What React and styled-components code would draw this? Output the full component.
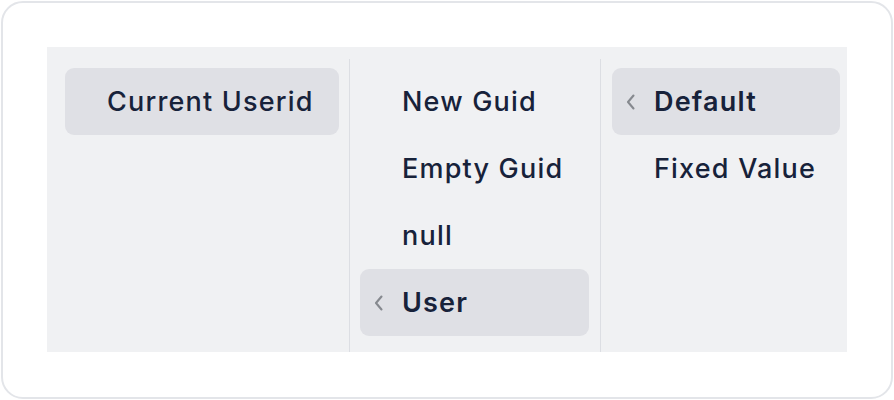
import React from 'react';
import styled, { createGlobalStyle } from 'styled-components';

const GlobalStyle = createGlobalStyle`
  html, body {
    margin: 0;
    padding: 0;
    background: #ffffff;
  }
  body {
    font-family: Inter, "Noto Sans", sans-serif;
  }
`;

const Card = styled.div`
  box-sizing: border-box;
  width: 892px;
  height: 398px;
  margin: 1px;
  padding: 44px;
  border: 2px solid #e3e5e9;
  border-radius: 22px;
  background: #ffffff;
`;

const Panel = styled.div`
  display: flex;
  height: 305px;
  background: #f0f1f3;
`;

const Column = styled.div`
  box-sizing: border-box;
  display: flex;
  flex-direction: column;
  width: ${p => p.width}px;
  padding: 21px ${p => p.padRight}px 0 ${p => p.padLeft}px;
`;

const Divider = styled.div`
  width: 1px;
  margin-top: 12px;
  background: #dcdee3;
`;

const Item = styled.div`
  box-sizing: border-box;
  display: flex;
  align-items: center;
  height: 67px;
  padding-left: 14px;
  border-radius: 9px;
  background: ${p => (p.active ? '#dfe0e5' : 'transparent')};
  color: #17223a;
  font-size: 27px;
  font-weight: ${p => (p.bold ? 600 : 500)};
  letter-spacing: 1.2px;
  white-space: nowrap;
`;

const Slot = styled.span`
  display: flex;
  align-items: center;
  width: 28px;
  flex: none;
`;

const Chevron = () => (
  <svg width="10" height="16" viewBox="0 0 10 16" fill="none">
    <path d="M7.5 1.5 L2 8 L7.5 14.5" stroke="#86898f" strokeWidth="2.1" strokeLinecap="round" strokeLinejoin="round" />
  </svg>
);

const columns = [
  {
    width: 302, padLeft: 18, padRight: 10,
    items: [{ label: 'Current Userid', active: true }],
  },
  {
    width: 250, padLeft: 10, padRight: 11,
    items: [
      { label: 'New Guid' },
      { label: 'Empty Guid' },
      { label: 'null' },
      { label: 'User', active: true, bold: true, chevron: true },
    ],
  },
  {
    width: 246, padLeft: 11, padRight: 7,
    items: [
      { label: 'Default', active: true, bold: true, chevron: true },
      { label: 'Fixed Value' },
    ],
  },
];

export default function App() {
  return (
    <>
      <GlobalStyle />
      <Card>
        <Panel>
          {columns.map((col, i) => (
            <React.Fragment key={i}>
              {i > 0 && <Divider />}
              <Column width={col.width} padLeft={col.padLeft} padRight={col.padRight}>
                {col.items.map(item => (
                  <Item key={item.label} active={item.active} bold={item.bold}>
                    <Slot>{item.chevron && <Chevron />}</Slot>
                    {item.label}
                  </Item>
                ))}
              </Column>
            </React.Fragment>
          ))}
        </Panel>
      </Card>
    </>
  );
}
